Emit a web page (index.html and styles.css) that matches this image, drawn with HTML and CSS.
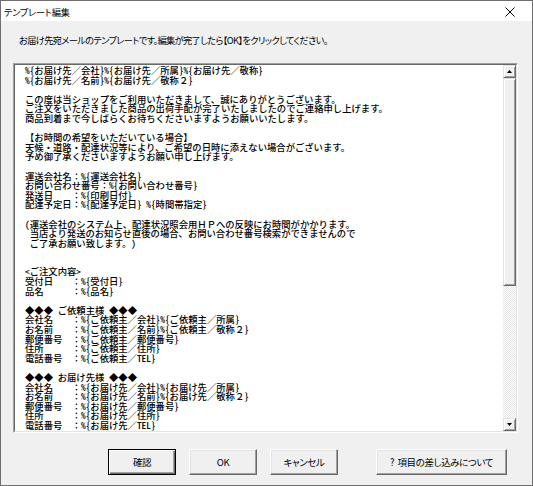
FILE: index.html
```html
<!DOCTYPE html>
<html lang="ja">
<head>
<meta charset="utf-8">
<title>テンプレート編集</title>
<link rel="stylesheet" href="styles.css">
</head>
<body>
<div class="window">
  <div class="titlebar">
    <span class="title">テンプレート編集</span>
    <svg class="close" width="10" height="10" viewBox="0 0 10 10" aria-hidden="true"><path d="M0.5 0.5L9.5 9.5M9.5 0.5L0.5 9.5" stroke="#000" stroke-width="1"/></svg>
  </div>
  <div class="client">
    <p class="label">お届け先宛メールのテンプレートです。編集が完了したら【OK】をクリックしてください。</p>
    <div class="editor">
      <div class="editor-inner">
        <div class="text"><span class="h">%{</span>お届け先／会社<span class="h">}%{</span>お届け先／所属<span class="h">}%{</span>お届け先／敬称<span class="h">}</span>
<span class="h">%{</span>お届け先／名前<span class="h">}%{</span>お届け先／敬称２<span class="h">}</span>

この度は当ショップをご利用いただきまして、誠にありがとうございます。
ご注文をいただきました商品の出荷手配が完了いたしましたのでご連絡申し上げます。
商品到着まで今しばらくお待ちくださいますようお願いいたします。

【お時間の希望をいただいている場合】
天候・道路・配達状況等により、ご希望の日時に添えない場合がございます。
予め御了承くださいますようお願い申し上げます。

運送会社名：<span class="h">%{</span>運送会社名<span class="h">}</span>
お問い合わせ番号：<span class="h">%{</span>お問い合わせ番号<span class="h">}</span>
発送日　　：<span class="h">%{</span>印刷日付<span class="h">}</span>
配達予定日：<span class="h">%{</span>配達予定日<span class="h">} %{</span>時間帯指定<span class="h">}</span>

<span class="h">(</span>運送会社のシステム上、配達状況照会用ＨＰへの反映にお時間がかかります。
<span class="h"> </span>当店より発送のお知らせ直後の場合、お問い合わせ番号検索ができませんので
<span class="h"> </span>ご了承お願い致します。<span class="h">)</span>


<span class="h">&lt;</span>ご注文内容<span class="h">&gt;</span>
受付日　　：<span class="h">%{</span>受付日<span class="h">}</span>
品名　　　：<span class="h">%{</span>品名<span class="h">}</span>

◆◆◆<span class="h"> </span>ご依頼主様<span class="h"> </span>◆◆◆
会社名　　：<span class="h">%{</span>ご依頼主／会社<span class="h">}%{</span>ご依頼主／所属<span class="h">}</span>
お名前　　：<span class="h">%{</span>ご依頼主／名前<span class="h">}%{</span>ご依頼主／敬称２<span class="h">}</span>
郵便番号　：<span class="h">%{</span>ご依頼主／郵便番号<span class="h">}</span>
住所　　　：<span class="h">%{</span>ご依頼主／住所<span class="h">}</span>
電話番号　：<span class="h">%{</span>ご依頼主／<span class="h">TEL}</span>

◆◆◆<span class="h"> </span>お届け先様<span class="h"> </span>◆◆◆
会社名　　：<span class="h">%{</span>お届け先／会社<span class="h">}%{</span>お届け先／所属<span class="h">}</span>
お名前　　：<span class="h">%{</span>お届け先／名前<span class="h">}%{</span>お届け先／敬称２<span class="h">}</span>
郵便番号　：<span class="h">%{</span>お届け先／郵便番号<span class="h">}</span>
住所　　　：<span class="h">%{</span>お届け先／住所<span class="h">}</span>
電話番号　：<span class="h">%{</span>お届け先／<span class="h">TEL}</span></div>
        <div class="scrollbar">
          <div class="sb-btn"><svg width="5" height="3" viewBox="0 0 5 3" aria-hidden="true"><path d="M2.5 0L5 3H0Z" fill="#000"/></svg></div>
          <div class="sb-track"><div class="sb-thumb"></div></div>
          <div class="sb-btn"><svg width="5" height="3" viewBox="0 0 5 3" aria-hidden="true"><path d="M0 0H5L2.5 3Z" fill="#000"/></svg></div>
        </div>
      </div>
    </div>
    <div class="buttons">
      <button class="btn btn-default">確認</button>
      <button class="btn">OK</button>
      <button class="btn">キャンセル</button>
      <button class="btn btn-help">?&nbsp; 項目の差し込みについて</button>
    </div>
  </div>
</div>
</body>
</html>
```
FILE: styles.css
```css
html, body {
  margin: 0;
  padding: 0;
}
body {
  width: 533px;
  height: 486px;
  overflow: hidden;
  background: #f0f0f0;
  font-family: "Noto Sans CJK JP", "Noto Sans", sans-serif;
  color: #000;
}
.window {
  box-sizing: border-box;
  width: 533px;
  height: 486px;
  border: 1px solid #6f6f6f;
  background: #f0f0f0;
  display: flex;
  flex-direction: column;
}
.titlebar {
  height: 20px;
  background: #fff;
  display: flex;
  align-items: center;
  justify-content: space-between;
  padding: 0 17px 0 3px;
  flex: none;
}
.title {
  font-size: 9.2px;
  letter-spacing: -0.2px;
  font-feature-settings: "palt";
  line-height: 14px;
  padding-top: 1px;
}
.close {
  display: block;
  margin-top: 1px;
}
.client {
  flex: 1;
  display: flex;
  flex-direction: column;
}
.label {
  margin: 12px 0 0 18px;
  font-size: 9.2px;
  letter-spacing: -0.6px;
  line-height: 14px;
  font-feature-settings: "palt";
}
.editor {
  margin: 16px 0 0 12px;
  width: 505px;
  height: 370px;
  box-sizing: border-box;
  border: 1px solid;
  border-color: #a0a0a0 #ffffff #ffffff #a0a0a0;
}
.editor-inner {
  box-sizing: border-box;
  height: 100%;
  border: 1px solid;
  border-color: #696969 #e3e3e3 #e3e3e3 #696969;
  background: #fff;
  display: flex;
}
.text {
  flex: 1;
  white-space: pre;
  font-size: 9.33px;
  line-height: 9.6px;
  font-weight: 500;
  padding: 1px 0 0 10px;
}
.h {
  display: inline-block;
  height: 9.6px;
  vertical-align: top;
  font-feature-settings: "hwid";
}
.scrollbar {
  width: 13px;
  flex: none;
  display: flex;
  flex-direction: column;
}
.sb-btn {
  height: 13px;
  box-sizing: border-box;
  flex: none;
  background: #f0f0f0;
  border: 1px solid;
  border-color: #e3e3e3 #696969 #696969 #e3e3e3;
  box-shadow: inset 1px 1px #fff, inset -1px -1px #a0a0a0;
  display: flex;
  align-items: center;
  justify-content: center;
}
.sb-btn svg {
  display: block;
}
.sb-track {
  flex: 1;
  background-color: #fff;
  background-image: conic-gradient(#e6e6e6 25%, #fff 0 50%, #e6e6e6 0 75%, #fff 0);
  background-size: 2px 2px;
}
.sb-thumb {
  height: 208px;
  box-sizing: border-box;
  background: #f0f0f0;
  border: 1px solid;
  border-color: #e3e3e3 #696969 #696969 #e3e3e3;
  box-shadow: inset 1px 1px #fff, inset -1px -1px #a0a0a0;
}
.buttons {
  display: flex;
  gap: 13px;
  margin: 16px 0 0 107px;
}
.btn {
  box-sizing: border-box;
  width: 68px;
  height: 26px;
  padding: 0;
  font-family: "Noto Sans CJK JP", "Noto Sans", sans-serif;
  font-size: 9.5px;
  letter-spacing: -0.4px;
  font-feature-settings: "palt";
  color: #000;
  background: #f0f0f0;
  border: 1px solid;
  border-color: #fff #696969 #696969 #fff;
  box-shadow: inset -1px -1px #a0a0a0, inset 1px 1px #e3e3e3;
}
.btn-default {
  border-color: #000;
  box-shadow: inset 1px 1px #fff, inset -1px -1px #696969, inset -2px -2px #a0a0a0;
}
.btn-help {
  width: 131px;
  margin-left: 25px;
}
```
